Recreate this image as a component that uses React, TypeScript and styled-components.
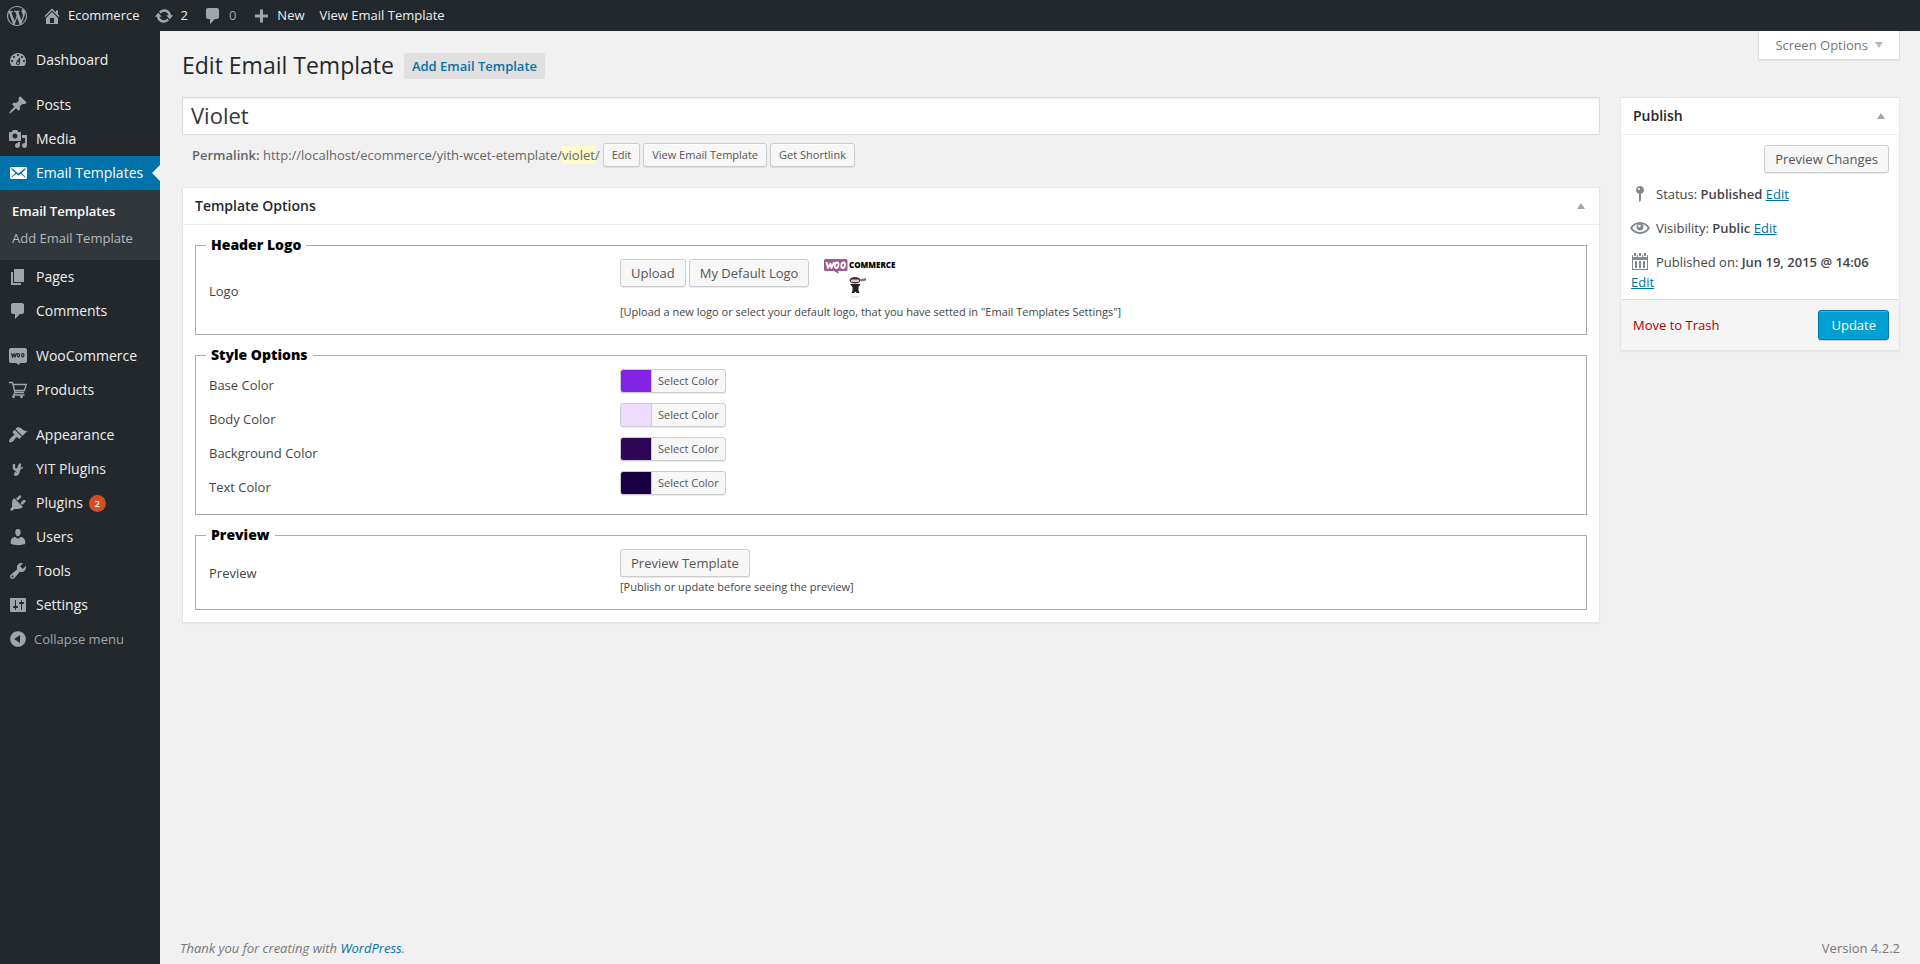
import React from "react";
import styled, { createGlobalStyle, css } from "styled-components";

const GlobalStyle = createGlobalStyle`
  *, *::before, *::after { box-sizing: border-box; }
  body {
    margin: 0;
    background: #f1f1f1;
    color: #444;
    font-family: "Open Sans", sans-serif;
    font-size: 13px;
    line-height: 20px;
  }
  button, input { font-family: inherit; }
  b, strong { font-weight: 600; }
  a { color: #0073aa; }
  ul { list-style: none; margin: 0; padding: 0; }
`;

/* ---------- icons (20 x 20 grid) ---------- */

const paths = {
  wordpress:
    "M20 10c0-5.51-4.49-10-10-10C4.48 0 0 4.49 0 10c0 5.52 4.48 10 10 10 5.51 0 10-4.48 10-10zM7.78 15.37L4.37 6.22c.55-.02 1.17-.08 1.17-.08.5-.06.44-1.13-.06-1.11 0 0-1.45.11-2.37.11-.18 0-.37 0-.58-.01C4.12 2.69 6.87 1.11 10 1.11c2.33 0 4.45.87 6.05 2.34-.68-.11-1.65.39-1.65 1.58 0 .74.45 1.36.9 2.1.35.61.55 1.36.55 2.46 0 1.49-1.4 5-1.4 5l-3.03-8.37c.54-.02.82-.17.82-.17.5-.05.44-1.25-.06-1.22 0 0-1.44.12-2.38.12-.87 0-2.33-.12-2.33-.12-.5-.03-.56 1.2-.06 1.22l.92.08 1.26 3.41zM17.41 10c.24-.64.74-1.87.43-4.25.7 1.29 1.05 2.71 1.05 4.25 0 3.29-1.73 6.24-4.4 7.78.97-2.59 1.94-5.2 2.92-7.78zM6.1 18.09C3.12 16.65 1.11 13.53 1.11 10c0-1.3.23-2.48.72-3.59C3.25 10.3 4.67 14.2 6.1 18.09zm4.03-6.63l2.58 6.98c-.86.29-1.76.45-2.71.45-.79 0-1.57-.11-2.29-.33.81-2.38 1.62-4.74 2.42-7.1z",
  home: "M16 8.5l1.53 1.53-1.06 1.06L10 4.6l-6.47 6.49-1.06-1.06L10 2.5l4 4v-2h2v4zm-6-2.46l6 5.99V18H4v-5.97zM12 17v-5H8v5h4z",
  update:
    "M10.2 3.28c3.53 0 6.43 2.61 6.92 6h2.08l-3.5 4-3.5-4h2.32c-.45-1.97-2.21-3.45-4.32-3.45-1.45 0-2.73.71-3.54 1.78L4.95 5.66C6.23 4.2 8.11 3.28 10.2 3.28zm-.4 13.44c-3.52 0-6.43-2.61-6.92-6H.8l3.5-4c1.17 1.33 2.33 2.67 3.5 4H5.48c.45 1.97 2.21 3.45 4.32 3.45 1.45 0 2.73-.71 3.54-1.78l1.71 1.95c-1.28 1.46-3.15 2.38-5.25 2.38z",
  plus: "M17 8.5v3h-5v5H9v-5H4v-3h5v-5h3v5h5z",
  dashboard:
    "M3.76 16h12.48c1.1-1.37 1.76-3.11 1.76-5 0-4.42-3.58-8-8-8s-8 3.58-8 8c0 1.89.66 3.63 1.76 5zM10 4c.55 0 1 .45 1 1s-.45 1-1 1-1-.45-1-1 .45-1 1-1zM6 6c.55 0 1 .45 1 1s-.45 1-1 1-1-.45-1-1 .45-1 1-1zm8 0c.55 0 1 .45 1 1s-.45 1-1 1-1-.45-1-1 .45-1 1-1zm-5.37 5.55L12 7v6c0 1.1-.9 2-2 2s-2-.9-2-2c0-.57.24-1.08.63-1.45zM4 10c.55 0 1 .45 1 1s-.45 1-1 1-1-.45-1-1 .45-1 1-1zm12 0c.55 0 1 .45 1 1s-.45 1-1 1-1-.45-1-1 .45-1 1-1zm-5 3c0-.55-.45-1-1-1s-1 .45-1 1 .45 1 1 1 1-.45 1-1z",
  post: "M10.44 3.02l1.82-1.82 6.36 6.35-1.83 1.82c-1.05-.68-2.48-.57-3.41.36l-.75.75c-.92.93-1.04 2.35-.35 3.41l-1.83 1.82-2.41-2.41-2.8 2.79c-.42.42-3.38 2.71-3.8 2.29s1.86-3.39 2.28-3.81l2.79-2.79L4.1 9.36l1.83-1.82c1.05.69 2.48.57 3.4-.36l.75-.75c.93-.92 1.05-2.35.36-3.41z",
  media:
    "M13 11V4c0-.55-.45-1-1-1h-1.67L9 1H5L3.67 3H2c-.55 0-1 .45-1 1v7c0 .55.45 1 1 1h10c.55 0 1-.45 1-1zM7 4.5c1.38 0 2.5 1.12 2.5 2.5S8.38 9.5 7 9.5 4.5 8.38 4.5 7 5.62 4.5 7 4.5zM14 6h5v10.5c0 1.38-1.12 2.5-2.5 2.5S14 17.88 14 16.5s1.12-2.5 2.5-2.5c.17 0 .34.02.5.05V9h-3V6zm-4 8.05V13h2v3.5c0 1.38-1.12 2.5-2.5 2.5S7 17.88 7 16.5 8.12 14 9.5 14c.17 0 .34.02.5.05z",
  email:
    "M19 14.5v-9c0-.83-.67-1.5-1.5-1.5H3.49c-.83 0-1.5.67-1.5 1.5v9c0 .83.67 1.5 1.5 1.5H17.5c.83 0 1.5-.67 1.5-1.5zm-1.31-9.11c.33.33.15.67-.03.84L13.6 9.95l3.9 4.06c.12.14.2.36.06.51-.13.16-.43.15-.56.05l-4.37-3.73-2.14 1.95-2.13-1.95-4.37 3.73c-.13.1-.43.11-.56-.05-.14-.15-.06-.37.06-.51l3.9-4.06-4.06-3.72c-.18-.17-.36-.51-.03-.84s.67-.17.95.07l6.24 5.04 6.25-5.04c.28-.24.62-.4.95-.07z",
  page: "M6 15V2h10v13H6zm-1 1h8v2H3V5h2v11z",
  comments:
    "M5 2h9c1.1 0 2 .9 2 2v7c0 1.1-.9 2-2 2h-2l-5 5v-5H5c-1.1 0-2-.9-2-2V4c0-1.1.9-2 2-2z",
  appearance:
    "M14.48 11.06L7.41 3.99l1.5-1.5c.5-.56 2.3-.47 3.51.32 1.21.8 1.43 1.28 2.91 2.1 1.18.64 2.45 1.26 4.45.85zm-.71.71L6.7 4.7 4.93 6.47c-.39.39-.39 1.02 0 1.41l1.06 1.06c.39.39.39 1.03 0 1.42-.6.6-1.43 1.11-2.21 1.69-.35.26-.7.53-1.01.84C1.43 14.23.4 16.08 1.4 17.07c.99 1 2.84-.03 4.18-1.36.31-.31.58-.66.85-1.02.57-.78 1.08-1.61 1.69-2.21.39-.39 1.02-.39 1.41 0l1.06 1.06c.39.39 1.02.39 1.41 0z",
  plugins:
    "M13.11 4.36L9.87 7.6 8 5.73l3.24-3.24c.35-.34 1.05-.2 1.56.32.52.51.66 1.21.31 1.55zm-8 1.77l.91-1.12 9.01 9.01-1.19.84c-.71.71-2.63 1.16-3.82 1.16H6.14L4.9 17.26c-.59.59-1.54.59-2.12 0-.59-.58-.59-1.53 0-2.12l1.24-1.24v-3.88c0-1.13.4-3.19 1.09-3.89zm7.26 3.97l3.24-3.24c.34-.35 1.04-.21 1.55.31.52.51.66 1.21.31 1.55l-3.24 3.25z",
  users:
    "M10 9.25c-2.27 0-2.73-3.44-2.73-3.44C7 4.02 7.82 2 9.97 2c2.16 0 2.98 2.02 2.71 3.81 0 0-.41 3.44-2.68 3.44zm0 2.57L12.72 10c2.39 0 4.52 2.33 4.52 4.53v2.49s-3.65 1.13-7.24 1.13c-3.65 0-7.24-1.13-7.24-1.13v-2.49c0-2.25 1.94-4.48 4.47-4.48z",
  tools:
    "M16.68 9.77c-1.34 1.34-3.3 1.67-4.95.99l-5.41 6.52c-.99.99-2.59.99-3.58 0s-.99-2.59 0-3.57l6.52-5.42c-.68-1.65-.35-3.61.99-4.95 1.28-1.28 3.12-1.62 4.72-1.06l-2.89 2.89 2.82 2.82 2.86-2.87c.53 1.58.18 3.39-1.08 4.65zM3.81 16.21c.4.39 1.04.39 1.43 0 .4-.4.4-1.04 0-1.43-.39-.4-1.03-.4-1.43 0-.39.39-.39 1.03 0 1.43z",
  settings:
    "M18 16V4c0-.55-.45-1-1-1H3c-.55 0-1 .45-1 1v12c0 .55.45 1 1 1h14c.55 0 1-.45 1-1zM8 11h1c.55 0 1 .45 1 1s-.45 1-1 1H8v1.5c0 .28-.22.5-.5.5s-.5-.22-.5-.5V13H6c-.55 0-1-.45-1-1s.45-1 1-1h1V5.5c0-.28.22-.5.5-.5s.5.22.5.5V11zm5-2h-1c-.55 0-1-.45-1-1s.45-1 1-1h1V5.5c0-.28.22-.5.5-.5s.5.22.5.5V7h1c.55 0 1 .45 1 1s-.45 1-1 1h-1v5.5c0 .28-.22.5-.5.5s-.5-.22-.5-.5V9z",
  collapse:
    "M10 2.16c4.33 0 7.84 3.51 7.84 7.84s-3.51 7.84-7.84 7.84S2.16 14.33 2.16 10 5.67 2.16 10 2.16zm2 11.72V6.12L6.18 9.97z",
  status:
    "M14 6c0 1.86-1.28 3.41-3 3.86V16c0 1-2 2-2 2V9.86c-1.72-.45-3-2-3-3.86 0-2.21 1.79-4 4-4s4 1.79 4 4zM8 5c0 .55.45 1 1 1s1-.45 1-1-.45-1-1-1-1 .45-1 1z",
  visibility:
    "M19.7 9.4C17.7 6 14 3.9 10 3.9S2.3 6 .3 9.4L0 10l.3.6c2 3.4 5.7 5.5 9.7 5.5s7.7-2.1 9.7-5.5l.3-.6zM10 14.1c-3.1 0-6-1.6-7.7-4.1C3.6 8 5.7 6.6 8 6.1c-.9.6-1.5 1.7-1.5 2.9 0 1.9 1.6 3.5 3.5 3.5s3.5-1.6 3.5-3.5c0-1.2-.6-2.3-1.5-2.9 2.3.5 4.4 1.9 5.7 3.9-1.7 2.5-4.6 4.1-7.7 4.1zM9.4 6.7a1.3 1.3 0 1 1 0 2.6 1.3 1.3 0 0 1 0-2.6z",
  calendar:
    "M4 1h2v3H4zM9 1h2v3H9zM14 1h2v3h-2zM2 3h1v2h4V3h1v2h4V3h1v2h4V3h1v15H2zM3 8v9h14V8zM5 9h2v7H5zM9 9h2v7H9zM13 9h2v7h-2z",
  woo: "M3 2h14c1.1 0 2 .9 2 2v11c0 1.1-.9 2-2 2h-5l-1 2-3-2H3c-1.1 0-2-.9-2-2V4c0-1.1.9-2 2-2z",
  products: "",
  yit: "",
};

type IconName = keyof typeof paths;

const Glyph = styled.svg`
  flex: none;
  display: block;
  width: 20px;
  height: 20px;
  fill: currentColor;
`;

function Icon({ name }: { name: IconName }) {
  if (name === "products") {
    return (
      <Glyph viewBox="0 0 20 20" aria-hidden="true">
        <path
          d="M1 2.500h3.500L7 12.500h9M5 4.500h13.300l-2 6H6.500M7 12.500l-1.500 2.500h11"
          fill="none"
          stroke="currentColor"
          strokeWidth="1.3"
        />
        <circle cx="5.5" cy="16.8" r="1.4" />
        <circle cx="13.5" cy="16.8" r="1.4" />
      </Glyph>
    );
  }
  if (name === "yit") {
    return (
      <Glyph viewBox="0 0 20 20" aria-hidden="true">
        <path
          d="M6 6v3.500q1.500 2 4 .500L12 5.500 10.500 13q-1 3-3.500 2.500"
          fill="none"
          stroke="currentColor"
          strokeWidth="2.4"
          strokeLinecap="round"
          strokeLinejoin="round"
        />
        <path d="M7 14c2-2 4.500-3 7.500-5.500" fill="none" stroke="currentColor" strokeWidth="1.3" strokeLinecap="round" />
      </Glyph>
    );
  }
  return (
    <Glyph viewBox="0 0 20 20" aria-hidden="true">
      <path d={paths[name]} fillRule="evenodd" />
      {name === "woo" && (
        <path
          d="M3.500 7l1 4 1.500-3 1 3 1.500-4M10.500 7.500c1.500 0 1.500 3.500 0 3.500s-1.500-3.500 0-3.500zM14.800 7.500c1.500 0 1.500 3.500 0 3.500s-1.500-3.500 0-3.500z"
          fill="none"
          stroke="#23282d"
          strokeWidth="1.2"
        />
      )}
    </Glyph>
  );
}

/* ---------- admin bar ---------- */

const AdminBar = styled.header`
  display: flex;
  align-items: center;
  gap: 15px;
  height: 31px;
  padding: 0 7px;
  background: #23282d;
`;

const BarLink = styled.a<{ $dim?: boolean }>`
  display: flex;
  align-items: center;
  gap: 6px;
  color: ${(p) => (p.$dim ? "#a0a5aa" : "#eee")};
  text-decoration: none;
  line-height: 31px;
  svg { color: #a0a5aa; }
`;

/* ---------- side menu ---------- */

const Page = styled.div`
  display: flex;
  flex-direction: column;
  min-height: 100vh;
`;

const Body = styled.div`
  display: flex;
  flex: 1;
`;

const SideNav = styled.nav`
  flex: none;
  width: 160px;
  padding-top: 12px;
  background: #23282d;
`;

const MenuItem = styled.li<{ $spaced?: boolean }>`
  margin-top: ${(p) => (p.$spaced ? 11 : 0)}px;
`;

const MenuLink = styled.a<{ $active?: boolean }>`
  position: relative;
  display: flex;
  align-items: center;
  gap: 8px;
  height: 34px;
  padding-left: 8px;
  color: #eee;
  font-size: 14px;
  text-decoration: none;
  svg { color: #a0a5aa; }
  ${(p) =>
    p.$active &&
    css`
      background: #0073aa;
      color: #fff;
      svg { color: #fff; }
      &::after {
        content: "";
        position: absolute;
        right: 0;
        top: 9px;
        border: 8px solid transparent;
        border-right-color: #f1f1f1;
        border-left-width: 0;
      }
    `}
`;

const Count = styled.span`
  min-width: 17px;
  height: 17px;
  margin-left: -2px;
  border-radius: 10px;
  background: #d54e21;
  color: #fff;
  font-size: 9px;
  font-weight: 600;
  line-height: 17px;
  text-align: center;
`;

const SubMenu = styled.ul`
  padding: 8px 0;
  background: #32373c;
`;

const SubLink = styled.a<{ $current?: boolean }>`
  display: block;
  padding: 4px 12px;
  color: ${(p) => (p.$current ? "#fff" : "#b4b9be")};
  font-weight: ${(p) => (p.$current ? 600 : 400)};
  line-height: 19px;
  text-decoration: none;
`;

const CollapseButton = styled.button`
  display: flex;
  align-items: center;
  gap: 6px;
  width: 100%;
  height: 34px;
  padding: 0 0 0 8px;
  border: 0;
  background: none;
  color: #a0a5aa;
  font-size: 13px;
`;

/* ---------- content ---------- */

const Content = styled.main`
  display: flex;
  flex: 1;
  flex-direction: column;
  min-width: 0;
  padding: 0 20px;
`;

const TopRow = styled.div`
  display: flex;
  align-items: flex-start;
  justify-content: space-between;
  height: 66px;
  padding-left: 2px;
`;

const Heading = styled.div`
  display: flex;
  align-items: center;
  gap: 10px;
  padding-top: 19px;
`;

const Title = styled.h1`
  margin: 0;
  padding-bottom: 2px;
  color: #23282d;
  font-size: 23px;
  font-weight: 400;
  line-height: 30px;
`;

const AddLink = styled.a`
  padding: 3px 8px;
  border-radius: 2px;
  background: #e0e0e0;
  font-weight: 600;
  text-decoration: none;
`;

const ScreenOptions = styled.button`
  display: flex;
  align-items: center;
  gap: 7px;
  height: 29px;
  padding: 0 16px;
  border: 1px solid #ddd;
  border-top: 0;
  background: #fff;
  box-shadow: 0 1px 1px rgba(0, 0, 0, 0.04);
  color: #777;
  font-size: 13px;
`;

const Triangle = styled.span<{ $down?: boolean }>`
  width: 0;
  height: 0;
  border: 4px solid transparent;
  ${(p) =>
    p.$down
      ? css`
          border-top: 6px solid #b4b9be;
          border-bottom: 0;
        `
      : css`
          border-bottom: 6px solid #a0a5aa;
          border-top: 0;
        `}
`;

const Columns = styled.div`
  display: flex;
  align-items: flex-start;
  gap: 20px;
  padding-left: 2px;
`;

const MainColumn = styled.div`
  flex: 1;
  min-width: 0;
`;

const SideColumn = styled.div`
  flex: none;
  width: 280px;
`;

const TitleInput = styled.input`
  display: block;
  width: 100%;
  height: 38px;
  padding: 0 8px 2px;
  border: 1px solid #ddd;
  outline: 0;
  background: #fff;
  box-shadow: inset 0 1px 2px rgba(0, 0, 0, 0.07);
  color: #32373c;
  font-size: 22px;
`;

const Permalink = styled.div`
  display: flex;
  align-items: center;
  gap: 3px;
  height: 24px;
  margin: 8px 0 20px;
  padding-left: 10px;
  color: #666;
`;

const Slug = styled.span`
  background: #fffbcc;
`;

const Button = styled.button<{ $small?: boolean; $primary?: boolean }>`
  height: 28px;
  padding: 0 10px 1px;
  border: 1px solid #ccc;
  border-radius: 3px;
  background: #f7f7f7;
  box-shadow: inset 0 1px 0 #fff, 0 1px 0 rgba(0, 0, 0, 0.08);
  color: #555;
  font-size: 13px;
  ${(p) =>
    p.$small &&
    css`
      height: 24px;
      padding: 0 8px 1px;
      font-size: 11px;
    `}
  ${(p) =>
    p.$primary &&
    css`
      height: 30px;
      padding: 0 12px 1px;
      border-color: #0073aa;
      background: #00a0d2;
      box-shadow: inset 0 1px 0 rgba(120, 200, 230, 0.5), 0 1px 0 rgba(0, 0, 0, 0.15);
      color: #fff;
    `}
`;

const Box = styled.section`
  border: 1px solid #e5e5e5;
  background: #fff;
  box-shadow: 0 1px 1px rgba(0, 0, 0, 0.04);
`;

const BoxHeader = styled.div`
  display: flex;
  align-items: center;
  justify-content: space-between;
  height: 37px;
  padding: 0 14px 0 12px;
  border-bottom: 1px solid #eee;
`;

const BoxTitle = styled.h2`
  margin: 0;
  color: #23282d;
  font-size: 14px;
  font-weight: 600;
  line-height: 20px;
`;

const Toggle = styled.button`
  display: flex;
  padding: 0;
  border: 0;
  background: none;
`;

const Groups = styled.div`
  display: flex;
  flex-direction: column;
  gap: 10px;
  padding: 10px 12px 12px;
`;

const Group = styled.fieldset<{ $rows?: boolean }>`
  min-width: 0;
  margin: 0;
  padding: ${(p) => (p.$rows ? "0 13px 13px" : "4px 13px 12px")};
  border: 1px solid #aaa;
`;

const Legend = styled.legend`
  margin-left: -3px;
  padding: 0 5px;
  color: #000;
  font-size: 14px;
  font-weight: 800;
  line-height: 20px;
`;

const Field = styled.div`
  display: grid;
  grid-template-columns: 411px 1fr;
  align-items: center;
  min-height: 34px;
`;

const FieldLabel = styled.label<{ $low?: boolean }>`
  padding-top: ${(p) => (p.$low ? 6 : 0)}px;
`;

const Controls = styled.div`
  display: flex;
  align-items: flex-start;
  gap: 3px;
`;

const Hint = styled.p`
  margin: 0;
  font-size: 11px;
  line-height: 20px;
`;

const LogoArt = styled.svg`
  display: block;
  width: 86px;
  height: 47px;
  margin: -4px 0 0 9px;
`;

const ColorButton = styled.button`
  display: flex;
  align-items: stretch;
  height: 24px;
  margin-bottom: 2px;
  padding: 0;
  overflow: hidden;
  border: 1px solid #ccc;
  border-radius: 3px;
  background: #f7f7f7;
  box-shadow: 0 1px 0 rgba(0, 0, 0, 0.08);
  color: #555;
  font-size: 11px;
  line-height: 22px;
`;

const Swatch = styled.span<{ $color: string }>`
  width: 30px;
  background: ${(p) => p.$color};
`;

const ColorText = styled.span`
  padding: 0 6px;
  border-left: 1px solid #ccc;
`;

const PublishBody = styled.div`
  padding: 10px 10px 7px;
`;

const PreviewRow = styled.div`
  display: flex;
  justify-content: flex-end;
`;

const PublishList = styled.ul`
  display: flex;
  flex-direction: column;
  gap: 14px;
  padding-top: 11px;
`;

const PublishItem = styled.li`
  line-height: 20px;
  svg {
    display: inline-block;
    margin: 0 6px 0 -1px;
    color: #82878c;
    vertical-align: top;
  }
`;

const PublishFooter = styled.div`
  display: flex;
  align-items: center;
  justify-content: space-between;
  height: 51px;
  padding: 0 10px 0 12px;
  border-top: 1px solid #ddd;
  background: #f5f5f5;
`;

const TrashLink = styled.a`
  color: #a00;
  text-decoration: none;
`;

const Footer = styled.footer`
  display: flex;
  justify-content: space-between;
  margin-top: auto;
  padding-bottom: 6px;
  color: #777;
  a { text-decoration: none; }
`;

type MenuEntry = { icon: IconName; label: string; spaced?: boolean; count?: number; active?: boolean };

const menu: MenuEntry[] = [
  { icon: "dashboard", label: "Dashboard" },
  { icon: "post", label: "Posts", spaced: true },
  { icon: "media", label: "Media" },
  { icon: "email", label: "Email Templates", active: true },
  { icon: "page", label: "Pages" },
  { icon: "comments", label: "Comments" },
  { icon: "woo", label: "WooCommerce", spaced: true },
  { icon: "products", label: "Products" },
  { icon: "appearance", label: "Appearance", spaced: true },
  { icon: "yit", label: "YIT Plugins" },
  { icon: "plugins", label: "Plugins", count: 2 },
  { icon: "users", label: "Users" },
  { icon: "tools", label: "Tools" },
  { icon: "settings", label: "Settings" },
];

const colors = [
  { id: "base", label: "Base Color", value: "#8224e3" },
  { id: "body", label: "Body Color", value: "#eedcff" },
  { id: "background", label: "Background Color", value: "#2d0756" },
  { id: "text", label: "Text Color", value: "#180042" },
];

function StoreLogo() {
  return (
    <LogoArt viewBox="0 0 86 47" role="img" aria-label="WooCommerce">
      <path
        d="M4.500 4h20.500q1.500 0 1.500 1.500v9q0 1.500-1.500 1.500h-8l1 3-5-3h-8.500Q3 16 3 14.500v-9Q3 4 4.500 4z"
        fill="#9b5c8f"
      />
      <path
        d="M5.500 7l1.500 6 2.500-4.500 1 4.500 2.500-6M16 7.500c2.600 0 1.600 5.500-.800 5.500s-1.600-5.500.800-5.500zM22.500 7.500c2.600 0 1.600 5.500-.800 5.500s-1.600-5.500.800-5.500z"
        fill="none"
        stroke="#fff"
        strokeWidth="1.8"
        strokeLinejoin="round"
      />
      <text x="28" y="13" fill="#000" fontFamily="Open Sans, sans-serif" fontSize="8" fontWeight="800">
        COMMERCE
      </text>
      <path d="M28.500 25q1-3 5.500-3t5.500 3q-.500 3.500-5.500 3.500T28.500 25z" fill="#3a3448" />
      <rect x="30" y="24.5" width="8" height="2.5" rx="1" fill="#e8c79b" />
      <path d="M39 24.500l6-1.500v2.500l-5 1z" fill="#77748a" />
      <path d="M29 29h10.500l-2 3v3.500l1 2.500h-3l-1-1.500-1.500 1.500h-2.500l1-2.500V32z" fill="#242029" />
      <ellipse cx="34" cy="42" rx="5" ry="1" fill="#e6e6e6" />
    </LogoArt>
  );
}

export default function App() {
  return (
    <Page>
      <GlobalStyle />
      <AdminBar>
        <BarLink href="#" aria-label="WordPress"><Icon name="wordpress" /></BarLink>
        <BarLink href="#"><Icon name="home" />Ecommerce</BarLink>
        <BarLink href="#"><Icon name="update" />2</BarLink>
        <BarLink href="#" $dim><Icon name="comments" />0</BarLink>
        <BarLink href="#"><Icon name="plus" />New</BarLink>
        <BarLink href="#">View Email Template</BarLink>
      </AdminBar>
      <Body>
        <SideNav>
          <ul>
            {menu.map((m) => (
              <MenuItem key={m.label} $spaced={m.spaced}>
                <MenuLink href="#" $active={m.active}>
                  <Icon name={m.icon} />
                  {m.label}
                  {m.count && <Count>{m.count}</Count>}
                </MenuLink>
                {m.active && (
                  <SubMenu>
                    <li><SubLink href="#" $current>Email Templates</SubLink></li>
                    <li><SubLink href="#">Add Email Template</SubLink></li>
                  </SubMenu>
                )}
              </MenuItem>
            ))}
          </ul>
          <CollapseButton type="button"><Icon name="collapse" />Collapse menu</CollapseButton>
        </SideNav>
        <Content>
          <TopRow>
            <Heading>
              <Title>Edit Email Template</Title>
              <AddLink href="#">Add Email Template</AddLink>
            </Heading>
            <ScreenOptions type="button">Screen Options<Triangle $down /></ScreenOptions>
          </TopRow>
          <Columns>
            <MainColumn>
              <TitleInput aria-label="Title" defaultValue="Violet" />
              <Permalink>
                <span>
                  <strong>Permalink:</strong> http://localhost/ecommerce/yith-wcet-etemplate/<Slug>violet</Slug>/
                </span>
                <Button type="button" $small>Edit</Button>
                <Button type="button" $small>View Email Template</Button>
                <Button type="button" $small>Get Shortlink</Button>
              </Permalink>
              <Box>
                <BoxHeader>
                  <BoxTitle>Template Options</BoxTitle>
                  <Toggle type="button" aria-label="Toggle Template Options"><Triangle /></Toggle>
                </BoxHeader>
                <Groups>
                  <Group>
                    <Legend>Header Logo</Legend>
                    <Field>
                      <FieldLabel htmlFor="upload">Logo</FieldLabel>
                      <div>
                        <Controls>
                          <Button type="button" id="upload">Upload</Button>
                          <Button type="button">My Default Logo</Button>
                          <StoreLogo />
                        </Controls>
                        <Hint>[Upload a new logo or select your default logo, that you have setted in "Email Templates Settings"]</Hint>
                      </div>
                    </Field>
                  </Group>
                  <Group $rows>
                    <Legend>Style Options</Legend>
                    {colors.map((c) => (
                      <Field key={c.id}>
                        <FieldLabel htmlFor={c.id} $low>{c.label}</FieldLabel>
                        <Controls>
                          <ColorButton type="button" id={c.id}>
                            <Swatch $color={c.value} />
                            <ColorText>Select Color</ColorText>
                          </ColorButton>
                        </Controls>
                      </Field>
                    ))}
                  </Group>
                  <Group>
                    <Legend>Preview</Legend>
                    <Field>
                      <FieldLabel htmlFor="preview">Preview</FieldLabel>
                      <div>
                        <Button type="button" id="preview">Preview Template</Button>
                        <Hint>[Publish or update before seeing the preview]</Hint>
                      </div>
                    </Field>
                  </Group>
                </Groups>
              </Box>
            </MainColumn>
            <SideColumn>
              <Box>
                <BoxHeader>
                  <BoxTitle>Publish</BoxTitle>
                  <Toggle type="button" aria-label="Toggle Publish"><Triangle /></Toggle>
                </BoxHeader>
                <PublishBody>
                  <PreviewRow><Button type="button">Preview Changes</Button></PreviewRow>
                  <PublishList>
                    <PublishItem><Icon name="status" />Status: <b>Published</b> <a href="#">Edit</a></PublishItem>
                    <PublishItem><Icon name="visibility" />Visibility: <b>Public</b> <a href="#">Edit</a></PublishItem>
                    <PublishItem><Icon name="calendar" />Published on: <b>Jun 19, 2015 @ 14:06</b> <a href="#">Edit</a></PublishItem>
                  </PublishList>
                </PublishBody>
                <PublishFooter>
                  <TrashLink href="#">Move to Trash</TrashLink>
                  <Button type="button" $primary>Update</Button>
                </PublishFooter>
              </Box>
            </SideColumn>
          </Columns>
          <Footer>
            <em>Thank you for creating with <a href="#">WordPress</a>.</em>
            <span>Version 4.2.2</span>
          </Footer>
        </Content>
      </Body>
    </Page>
  );
}
